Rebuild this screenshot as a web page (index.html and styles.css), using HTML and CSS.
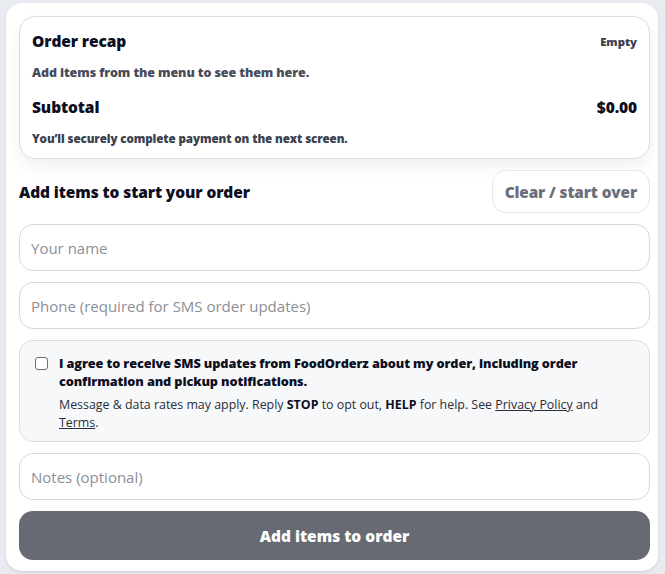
FILE: index.html
```html
<!DOCTYPE html>
<html>
<head>
<meta charset="utf-8">
<link rel="stylesheet" href="styles.css">
</head>
<body>
<div class="panel">
  <section class="recap">
    <div class="row">
      <h2 class="title">Order recap</h2>
      <span class="status">Empty</span>
    </div>
    <p class="hint">Add items from the menu to see them here.</p>
    <div class="row">
      <h2 class="title">Subtotal</h2>
      <span class="amount">$0.00</span>
    </div>
    <p class="small">You’ll securely complete payment on the next screen.</p>
  </section>

  <div class="head">
    <h3 class="start">Add items to start your order</h3>
    <button class="clear">Clear / start over</button>
  </div>

  <input class="field" type="text" placeholder="Your name">
  <input class="field" type="tel" placeholder="Phone (required for SMS order updates)">

  <label class="consent">
    <span class="box"></span>
    <span class="consent-text">
      <span class="agree">I agree to receive SMS updates from FoodOrderz about my order, including order confirmation and pickup notifications.</span>
      <span class="legal">Message &amp; data rates may apply. Reply <b>STOP</b> to opt out, <b>HELP</b> for help. See <a href="#">Privacy Policy</a> and <a href="#">Terms</a>.</span>
    </span>
  </label>

  <input class="field" type="text" placeholder="Notes (optional)">

  <button class="submit">Add items to order</button>
</div>
</body>
</html>
```

FILE: styles.css
```css
html, body {
  margin: 0;
  padding: 0;
}
body {
  background: #e8ebf0;
  font-family: "Open Sans", "Liberation Sans", sans-serif;
  color: #111322;
  height: 574px;
  overflow: hidden;
}
.panel {
  margin: 3px 7px 0 6px;
  background: #fff;
  border-radius: 16px;
  padding: 13px 8px 11px 13px;
  display: flex;
  flex-direction: column;
  gap: 11px;
  box-shadow: 0 1px 3px rgba(0,0,0,0.08);
  border-bottom: 1px solid #d4d6da;
}
.recap {
  border: 1px solid #dcdde2;
  border-radius: 16px;
  padding: 13px 12px 12px 12px;
  box-shadow: 0 8px 16px rgba(15,23,42,0.06);
  display: flex;
  flex-direction: column;
}
.row {
  display: flex;
  justify-content: space-between;
  align-items: center;
}
.title,
.start,
.amount {
  margin: 0;
  font-family: "Open Sans", sans-serif;
  font-weight: 800;
  font-size: 15.5px;
  line-height: 22px;
  color: #0d0f1f;
  letter-spacing: -0.1px;
}
.status {
  font-family: "Open Sans", sans-serif;
  font-weight: 800;
  font-size: 11.3px;
  color: #3b3f4e;
}
.hint {
  margin: 13px 0 15px;
  font-family: "Open Sans", sans-serif;
  font-weight: 800;
  font-size: 12.5px;
  line-height: 16px;
  color: #474b5a;
  letter-spacing: -0.1px;
}
.small {
  margin: 13px 0 0;
  font-family: "Open Sans", sans-serif;
  font-weight: 800;
  font-size: 11.6px;
  line-height: 15px;
  color: #3b3f4e;
  letter-spacing: -0.1px;
}
.head {
  display: flex;
  justify-content: space-between;
  align-items: center;
}
.clear {
  height: 43px;
  padding: 0 12px;
  background: #fff;
  border: 1px solid #e4e6ea;
  border-radius: 14px;
  font-family: "Open Sans", sans-serif;
  font-weight: 800;
  font-size: 15.3px;
  color: #6b6f7a;
  letter-spacing: -0.1px;
}
.field {
  box-sizing: border-box;
  width: 100%;
  height: 47px;
  border: 1px solid #d7d9de;
  border-radius: 14px;
  padding: 0 11px;
  font-family: "Open Sans", sans-serif;
  font-size: 15px;
  background: #fff;
  outline: none;
}
.field::placeholder {
  color: #8b8f98;
}
.consent {
  display: flex;
  gap: 11px;
  align-items: flex-start;
  background: #f7f8fa;
  border: 1px solid #dcdde2;
  border-radius: 14px;
  padding: 13px 14px 9px 15px;
}
.box {
  flex: none;
  width: 11px;
  height: 11px;
  margin-top: 3px;
  border: 1px solid #6d6f75;
  border-radius: 3px;
  background: #fff;
}
.consent-text {
  display: flex;
  flex-direction: column;
  gap: 6px;
}
.agree {
  font-family: "Open Sans", sans-serif;
  font-weight: 800;
  font-size: 12.7px;
  line-height: 18px;
  color: #0d0f1f;
  letter-spacing: -0.1px;
}
.legal {
  font-family: "Open Sans", sans-serif;
  font-size: 12.4px;
  line-height: 18px;
  color: #2a2d38;
}
.legal b {
  font-weight: 700;
  color: #0d0f1f;
}
.legal a {
  color: #2a2d38;
  text-decoration: underline;
}
.submit {
  height: 49px;
  border: none;
  border-radius: 14px;
  background: #676a73;
  color: #fff;
  font-family: "Open Sans", sans-serif;
  font-weight: 800;
  font-size: 15.5px;
}
```
